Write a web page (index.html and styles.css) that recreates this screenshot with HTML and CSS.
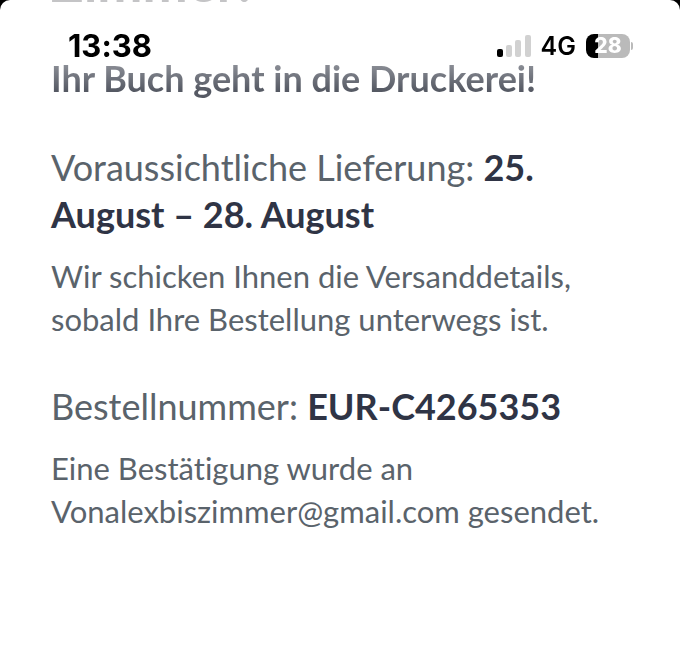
FILE: index.html
```
<!DOCTYPE html>
<html lang="de">
<head>
    <meta charset="UTF-8">
    <meta name="viewport" content="width=device-width, initial-scale=1.0">
    <title>Bestellung</title>
<link rel="stylesheet" href="styles.css">
</head>
<body>
<div class="page">
    <header class="status-bar">
        <span class="time">13:38</span>
        <div class="status-icons">
            <svg class="signal" width="34" height="22" viewBox="0 0 34 22">
                <rect x="0" y="14" width="6" height="8" rx="2" fill="#000"/>
                <rect x="9" y="10" width="6" height="12" rx="2" fill="#d1d1d1"/>
                <rect x="18" y="5" width="6" height="17" rx="2" fill="#d1d1d1"/>
                <rect x="28" y="0" width="6" height="22" rx="2" fill="#d1d1d1"/>
            </svg>
            <span class="network">4G</span>
            <div class="battery">
                <span class="battery-level">28</span>
                <span class="battery-cap"></span>
            </div>
        </div>
    </header>

    <main class="order">
        <h1 class="title">Zimmer!</h1>
        <h2 class="subtitle">Ihr Buch geht in die Druckerei!</h2>

        <section class="info">
            <p class="lead">Voraussichtliche Lieferung: <strong>25. August – 28. August</strong></p>
            <p class="note">Wir schicken Ihnen die Versanddetails, sobald Ihre Bestellung unterwegs ist.</p>
        </section>

        <section class="info">
            <p class="lead">Bestellnummer: <strong>EUR-C4265353</strong></p>
            <p class="note">Eine Bestätigung wurde an Vonalexbiszimmer@gmail.com gesendet.</p>
        </section>
    </main>
</div>
</body>
</html>
```
FILE: styles.css
```
body{
    margin: 0;
    background-color: #000;
    font-family: Lato, "Noto Sans", sans-serif;
    font-variant-ligatures: none;
    color: #5a636b;
}
.page{
    min-height: 100vh;
    background-color: #fff;
    border-radius: 10px 10px 0 0;
    overflow: hidden;
}

/* status bar lies over the scrolled content */
.status-bar{
    position: fixed;
    top: 0;
    left: 0;
    right: 0;
    height: 91px;
    box-sizing: border-box;
    padding: 0 47px 0 68px;
    display: flex;
    justify-content: space-between;
    align-items: center;
    font-family: Inter, "Liberation Sans", sans-serif;
    color: #000;
}
.time{
    font-size: 31px;
    font-weight: 700;
}
.status-icons{
    display: flex;
    align-items: center;
    gap: 10px;
}
.network{
    font-size: 25px;
    font-weight: 600;
}
.battery{
    display: flex;
    align-items: center;
    gap: 1px;
}
.battery-level{
    width: 44px;
    height: 24px;
    border-radius: 8px;
    background: linear-gradient(90deg, #000 28%, #bababa 28%);
    color: #fff;
    font-size: 21px;
    font-weight: 800;
    line-height: 24px;
    text-align: center;
}
.battery-cap{
    width: 2px;
    height: 8px;
    border-radius: 0 2px 2px 0;
    background-color: #bababa;
}

.order{
    padding: 0 48px 0 51px;
}
.title{
    margin: -54px 0 0;
    font-size: 54px;
    line-height: 72px;
    color: #c4c4c6;
}
.subtitle{
    margin: 37px 0 0;
    font-size: 36px;
    line-height: 47px;
    font-weight: 700;
    background: linear-gradient(180deg, #8a8d95 10px, #555963 36px);
    background-clip: text;
    -webkit-background-clip: text;
    color: transparent;
}
.info{
    margin-top: 42px;
}
.lead{
    margin: 0;
    font-size: 36px;
    line-height: 47px;
}
.lead strong{
    font-weight: 700;
    color: #2f3445;
}
.note{
    margin: 17px 0 0;
    font-size: 31px;
    line-height: 43px;
}
```
